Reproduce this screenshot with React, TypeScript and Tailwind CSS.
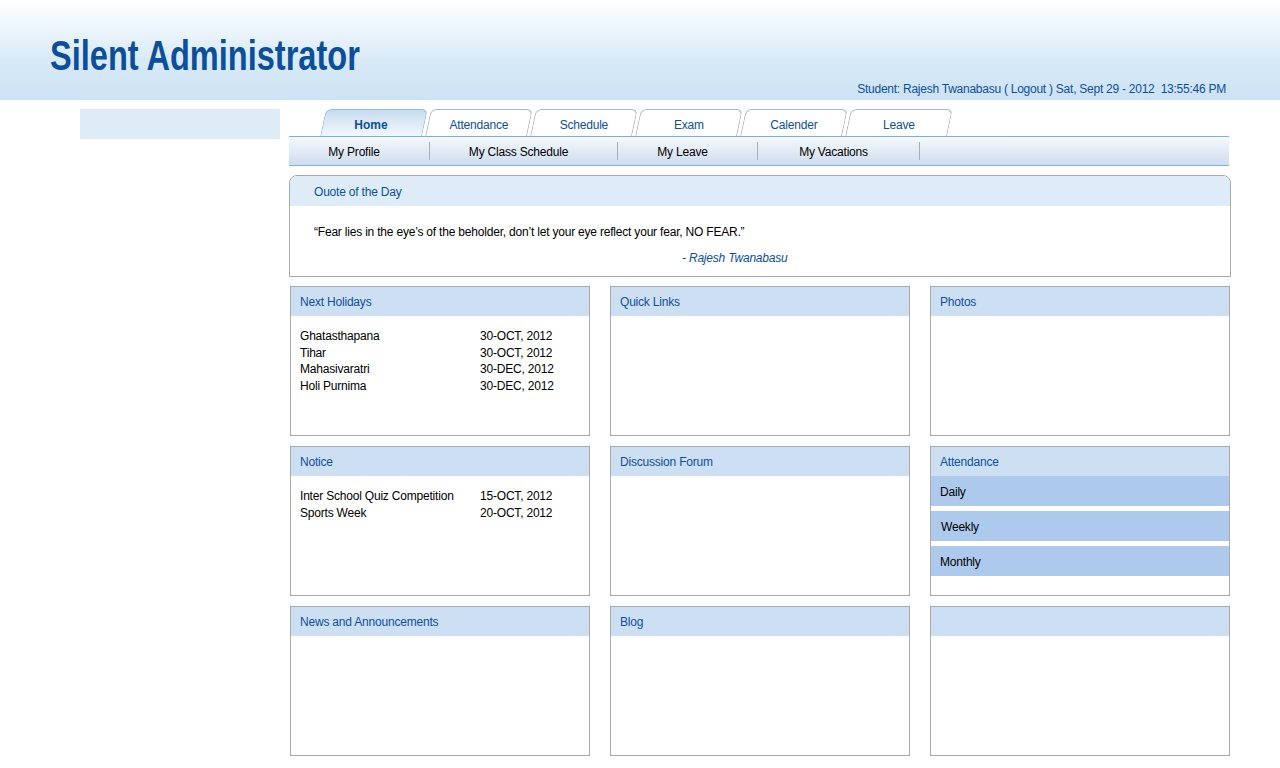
import React from "react";

const FONT = { fontFamily: '"Liberation Sans", Arial, sans-serif' };

const TABS = ["Home", "Attendance", "Schedule", "Exam", "Calender", "Leave"];

const SUBNAV = [
  { label: "My Profile", w: "w-[141px]" },
  { label: "My Class Schedule", w: "w-[188px]" },
  { label: "My Leave", w: "w-[140px]" },
  { label: "My Vacations", w: "w-[162px]" },
];

const HOLIDAYS = [
  ["Ghatasthapana", "30-OCT, 2012"],
  ["Tihar", "30-OCT, 2012"],
  ["Mahasivaratri", "30-DEC, 2012"],
  ["Holi Purnima", "30-DEC, 2012"],
];

const NOTICES = [
  ["Inter School Quiz Competition", "15-OCT, 2012"],
  ["Sports Week", "20-OCT, 2012"],
];

function Card({ title, children }: { title: string; children?: React.ReactNode }) {
  return (
    <div className="h-[150px] border border-[#ababab] bg-white flex flex-col">
      <div className="h-[29px] bg-[#cddff3] flex items-center pl-[9px] text-[12px] text-[#0d4f9c] tracking-[-0.2px]">
        {title}
      </div>
      {children}
    </div>
  );
}

function DateList({ rows }: { rows: string[][] }) {
  return (
    <div className="pt-[12px] pl-[9px] text-[12px] leading-[16.7px] text-black tracking-[-0.2px]">
      {rows.map(([name, date]) => (
        <div key={name} className="flex">
          <span className="w-[180px]">{name}</span>
          <span>{date}</span>
        </div>
      ))}
    </div>
  );
}

export default function App() {
  return (
    <div className="w-[1280px] h-[768px] bg-white overflow-hidden" style={FONT}>
      {/* header */}
      <header className="h-[100px] bg-gradient-to-b from-white via-[#d9eaf7] via-60% to-[#cce2f3] relative">
        <div className="absolute left-[50px] top-[30px] origin-left scale-x-[0.775]">
          <h1 className="text-[42px] font-bold text-[#0b4f9b] leading-[52px] whitespace-nowrap">Silent Administrator</h1>
        </div>
        <div className="absolute right-[54px] top-[80px] text-[12px] text-[#0d4f9c] tracking-[-0.25px] whitespace-pre">
          Student: Rajesh Twanabasu ( Logout ) Sat, Sept 29 - 2012  13:55:46 PM
        </div>
      </header>

      <div className="flex pt-[9px]">
        {/* sidebar */}
        <aside className="ml-[80px] w-[200px]">
          <div className="h-[30px] bg-[#ddecf7]" />
        </aside>

        {/* main */}
        <main className="ml-[9px] w-[942px]">
          {/* tabs */}
          <div className="mr-[2px] h-[28px] flex items-end gap-[3px] pl-[34px] border-b border-[#75b2dc]">
            {TABS.map((t, i) => (
              <div
                key={t}
                className={
                  i === 0
                    ? "relative w-[102px] h-[27px] -skew-x-12 rounded-t-[6px] border border-b-0 border-[#8cbfe2] bg-gradient-to-b from-[#c6dcf0] to-[#f3f7fc]"
                    : "relative w-[102px] h-[27px] -skew-x-12 rounded-t-[6px] border border-b-0 border-[#b3b3b3] bg-white"
                }
              >
                <div
                  className={
                    i === 0
                      ? "skew-x-12 h-full flex items-center justify-center pt-[3px] text-[12px] font-bold text-[#0b4f9b] pr-[6px]"
                      : "skew-x-12 h-full flex items-center justify-center pt-[3px] text-[12px] text-[#0d4f9c] tracking-[-0.2px]"
                  }
                >
                  {t}
                </div>
              </div>
            ))}
          </div>

          {/* sub nav */}
          <div className="mr-[2px] h-[29px] flex items-center bg-gradient-to-b from-[#f6f9fc] to-[#cfdcee] border-b border-[#78b3dc]">
            {SUBNAV.map((s) => (
              <div key={s.label} className={`${s.w} h-[18px] flex items-center justify-center pt-[1px] pr-[10px] border-r border-[#a8afb8] text-[12px] text-black tracking-[-0.2px]`}>
                {s.label}
              </div>
            ))}
          </div>

          {/* quote */}
          <div className="mt-[9px] h-[102px] rounded-t-[8px] border border-[#a9a9a9] overflow-hidden">
            <div className="h-[30px] bg-[#ddecf7] flex items-center pt-[1px] pl-[24px] text-[12px] text-[#0d4f9c] tracking-[-0.2px]">
              Ouote of the Day
            </div>
            <div className="pt-[17px] pl-[24px] text-[12px] text-black tracking-[-0.2px]">
              “Fear lies in the eye’s of the beholder, don’t let your eye reflect your fear, NO FEAR.”
            </div>
            <div className="pt-[8px] pl-[392px] text-[12px] italic text-[#0d4f9c] tracking-[-0.2px]">
              - Rajesh Twanabasu
            </div>
          </div>

          {/* cards */}
          <div className="mt-[9px] pl-[1px] pr-[1px] grid grid-cols-3 gap-x-[20px] gap-y-[10px]">
            <Card title="Next Holidays">
              <DateList rows={HOLIDAYS} />
            </Card>
            <Card title="Quick Links" />
            <Card title="Photos" />
            <Card title="Notice">
              <DateList rows={NOTICES} />
            </Card>
            <Card title="Discussion Forum" />
            <Card title="Attendance">
              <div className="flex flex-col gap-[5px] text-[12px] text-black tracking-[-0.2px]">
                <div className="h-[30px] bg-[#adcaec] flex items-center pt-[2px] pl-[9px]">Daily</div>
                <div className="h-[30px] bg-[#adcaec] flex items-center pt-[1px] pl-[10px]">Weekly</div>
                <div className="h-[30px] bg-[#adcaec] flex items-center pt-[2px] pl-[9px]">Monthly</div>
              </div>
            </Card>
            <Card title="News and Announcements" />
            <Card title="Blog" />
            <Card title="" />
          </div>
        </main>
      </div>
    </div>
  );
}
